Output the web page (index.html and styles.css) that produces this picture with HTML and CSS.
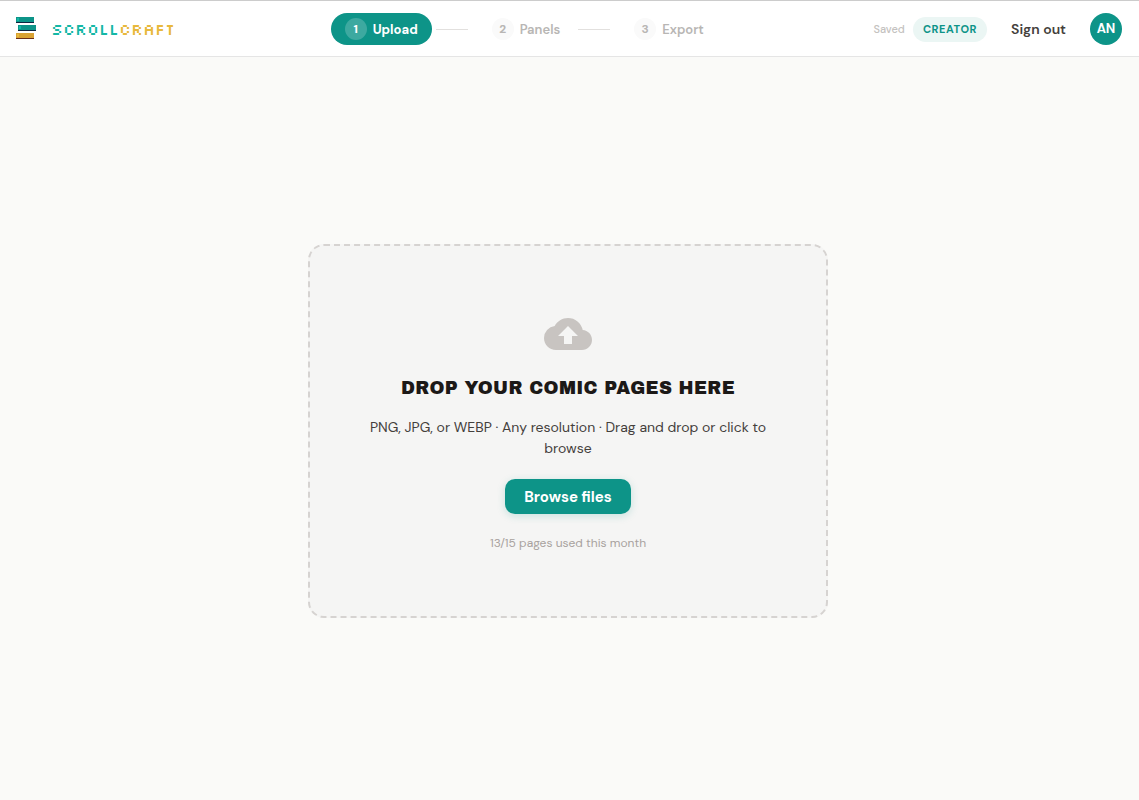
FILE: index.html
```html
<!DOCTYPE html>
<html lang="en">
<head>
  <meta charset="UTF-8">
  <meta name="viewport" content="width=device-width, initial-scale=1">
  <title>ScrollCraft</title>
  <link rel="stylesheet" href="styles.css">
</head>
<body>

  <header class="topbar">
    <a class="brand" href="#">
      <svg class="brand-mark" width="20" height="24" viewBox="0 0 20 24" shape-rendering="crispEdges" aria-hidden="true">
        <rect x="0" y="0" width="18" height="5" fill="#0d9488"/>
        <rect x="1" y="1" width="2" height="3" fill="#14b8a6"/>
        <rect x="0" y="5" width="18" height="1" fill="#0f2440"/>
        <rect x="2" y="8" width="18" height="5" fill="#0d9488"/>
        <rect x="3" y="9" width="2" height="3" fill="#14b8a6"/>
        <rect x="2" y="13" width="18" height="1" fill="#0f2440"/>
        <rect x="0" y="16" width="18" height="5" fill="#d9a233"/>
        <rect x="1" y="17" width="2" height="3" fill="#e8b93c"/>
        <rect x="0" y="21" width="18" height="1" fill="#6b2f1a"/>
      </svg>
      <span class="brand-name">SCrOLL<span class="brand-craft">CrAFT</span></span>
    </a>

    <nav class="steps" aria-label="Progress">
      <button class="step active" type="button"><span class="step-num">1</span>Upload</button>
      <span class="step-line"></span>
      <button class="step" type="button" disabled><span class="step-num">2</span>Panels</button>
      <span class="step-line"></span>
      <button class="step" type="button" disabled><span class="step-num">3</span>Export</button>
    </nav>

    <div class="account">
      <span class="saved">Saved</span>
      <span class="plan">CREATOR</span>
      <button class="sign-out" type="button">Sign out</button>
      <span class="avatar">AN</span>
    </div>
  </header>

  <main class="workspace">
    <section class="dropzone">
      <svg class="cloud" width="48" height="48" viewBox="0 0 24 24" aria-hidden="true">
        <path fill="currentColor" d="M19.35 10.04A7.49 7.49 0 0 0 12 4C9.11 4 6.6 5.64 5.35 8.04A5.994 5.994 0 0 0 0 14c0 3.31 2.69 6 6 6h13c2.76 0 5-2.24 5-5 0-2.64-2.05-4.78-4.65-4.96zM14 13v4h-4v-4H7l5-5 5 5h-3z"/>
      </svg>
      <h1 class="drop-title">DROP YOUR COMIC PAGES HERE</h1>
      <p class="drop-hint">PNG, JPG, or WEBP · Any resolution · Drag and drop or click to browse</p>
      <button class="browse" type="button">Browse files</button>
      <p class="usage">13/15 pages used this month</p>
    </section>
  </main>

</body>
</html>
```
FILE: styles.css
```css
* {
  box-sizing: border-box;
}
body {
  display: flex;
  flex-direction: column;
  min-height: 100vh;
  margin: 0;
  background-color: #fafaf8;
  color: #1c1917;
  font-family: "DM Sans", Inter, "Liberation Sans", sans-serif;
}
button {
  border: none;
  background: none;
  font-family: inherit;
  cursor: pointer;
}

/* Top bar */
.topbar {
  display: flex;
  align-items: center;
  justify-content: space-between;
  padding: 12px 17px 11px 16px;
  border-top: 1px solid #cccccc;
  border-bottom: 1px solid #e5e5e5;
  background-color: #ffffff;
}
.brand {
  display: flex;
  align-items: center;
  gap: 15px;
  text-decoration: none;
}
.brand-name {
  color: #14b8a6;
  font-family: Silkscreen, "Liberation Mono", monospace;
  font-size: 16px;
  font-weight: 400;
  line-height: 24px;
}
.brand-craft {
  color: #e8b93c;
}

/* Steps */
.steps {
  display: flex;
  align-items: center;
}
.step {
  display: flex;
  align-items: center;
  gap: 6px;
  height: 32px;
  padding: 0 14px;
  border-radius: 16px;
  color: #b8b6b4;
  font-size: 13px;
  font-weight: 600;
}
.step-num {
  display: flex;
  align-items: center;
  justify-content: center;
  width: 22px;
  height: 22px;
  border-radius: 50%;
  background-color: #fafafa;
  font-size: 12px;
  font-weight: 700;
}
.step.active {
  background-color: #0d9488;
  color: #ffffff;
  font-weight: 700;
}
.step.active .step-num {
  background-color: #3da9a0;
}
.step-line {
  width: 32px;
  height: 1px;
  margin: 0 10px 0 4px;
  background-color: #e2e0de;
}

/* Account */
.account {
  display: flex;
  align-items: center;
}
.saved {
  margin-right: 8px;
  color: #c4c2c0;
  font-size: 11px;
  font-weight: 500;
}
.plan {
  padding: 0 10px;
  border-radius: 13px;
  background-color: #ebf6f4;
  color: #0d9488;
  font-size: 11px;
  font-weight: 700;
  letter-spacing: 0.05em;
  line-height: 25px;
}
.sign-out {
  padding: 0 24px;
  color: #44403c;
  font-size: 14px;
  font-weight: 600;
}
.avatar {
  width: 32px;
  border-radius: 50%;
  background-color: #0d9488;
  color: #ffffff;
  font-size: 13px;
  font-weight: 700;
  line-height: 32px;
  text-align: center;
}

/* Upload area */
.workspace {
  display: flex;
  flex: 1;
  align-items: center;
  justify-content: center;
  padding: 5px 3px 0 0;
}
.dropzone {
  display: flex;
  flex-direction: column;
  align-items: center;
  width: 100%;
  max-width: 520px;
  padding: 64px 48px;
  border: 2px dashed #d6d3d1;
  border-radius: 16px;
  background-color: #f5f5f4;
  text-align: center;
}
.cloud {
  color: #c8c4c1;
}
.drop-title {
  margin: 17px 0 15px;
  font-family: "Archivo Black", Archivo, Inter, sans-serif;
  font-size: 18px;
  font-weight: 400;
  letter-spacing: 0.02em;
  line-height: 27px;
}
.drop-hint {
  margin: 0 0 20px;
  color: #44403c;
  font-size: 14px;
  line-height: 21px;
}
.browse {
  height: 35px;
  padding: 0 19px;
  border-radius: 10px;
  background-color: #0d9488;
  box-shadow: 0 2px 8px rgba(13, 148, 136, 0.2);
  color: #ffffff;
  font-size: 15px;
  font-weight: 700;
}
.usage {
  margin: 20px 0 0;
  color: #a8a29e;
  font-size: 12px;
  line-height: 18px;
}
```
